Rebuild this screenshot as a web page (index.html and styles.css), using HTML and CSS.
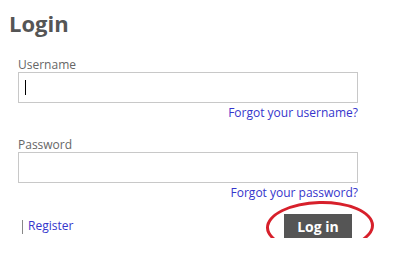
FILE: index.html
```html
<!DOCTYPE html>
<html>
<head>
	<meta charset="utf-8">
	<link rel="stylesheet" href="styles.css">
</head>
<body>
	<h1 class="titulo">Login</h1>
	<form class="login">
		<div class="campo">
			<label for="usuario">Username</label>
			<div class="caja">
				<input type="text" id="usuario">
				<span class="cursor"></span>
			</div>
			<div class="olvido"><a href="#">Forgot your username?</a></div>
		</div>
		<div class="campo">
			<label for="clave">Password</label>
			<div class="caja">
				<input type="password" id="clave">
			</div>
			<div class="olvido"><a href="#">Forgot your password?</a></div>
		</div>
		<div class="acciones">
			<span class="registro"><span class="barra"></span><a href="#">Register</a></span>
			<span class="boton_zona">
				<button type="button" class="boton">Log in</button>
				<span class="marca"></span>
			</span>
		</div>
	</form>
</body>
</html>
```

FILE: styles.css
```css
body {
	margin: 0;
	font-family: "Open Sans", sans-serif;
	color: #666;
	background: #fff;
}

.titulo {
	margin: 8px 0 0 9px;
	font-size: 22px;
	line-height: 30px;
	font-weight: bold;
	color: #555;
}

.login {
	width: 340px;
	margin: 19px 0 0 18px;
}

.campo {
	margin-bottom: 16px;
}

.campo label {
	display: block;
	font-size: 12px;
	line-height: 15px;
	color: #666;
}

.caja {
	position: relative;
}

.caja input {
	display: block;
	box-sizing: border-box;
	width: 340px;
	height: 31px;
	margin: 0;
	border: 1px solid #c8c8c8;
	outline: none;
	padding: 0 6px;
	font-family: "Open Sans", sans-serif;
	font-size: 12px;
}

.cursor {
	position: absolute;
	left: 7px;
	top: 8px;
	width: 1px;
	height: 15px;
	background: #000;
}

.olvido {
	margin-top: 2px;
	text-align: right;
	font-size: 12px;
	line-height: 16px;
}

a {
	color: #3535cc;
	text-decoration: none;
}

.acciones {
	display: flex;
	justify-content: space-between;
	align-items: center;
	margin-top: -3px;
	font-size: 12px;
	line-height: 16px;
}

.registro {
	display: flex;
	align-items: center;
}

.barra {
	display: block;
	width: 1px;
	height: 14px;
	margin: 1px 5px 0 4px;
	background: #888;
}

.boton_zona {
	position: relative;
	margin-right: 6px;
}

.boton {
	display: block;
	width: 68px;
	height: 24px;
	padding: 0;
	border: none;
	background: #555;
	color: #fff;
	font-family: "Open Sans", sans-serif;
	font-size: 14px;
	font-weight: bold;
}

.marca {
	position: absolute;
	left: -18px;
	top: -13px;
	width: 102px;
	height: 45px;
	border: 3px solid #d7202b;
	border-radius: 50%;
	transform: rotate(-1.5deg);
	pointer-events: none;
}
```
